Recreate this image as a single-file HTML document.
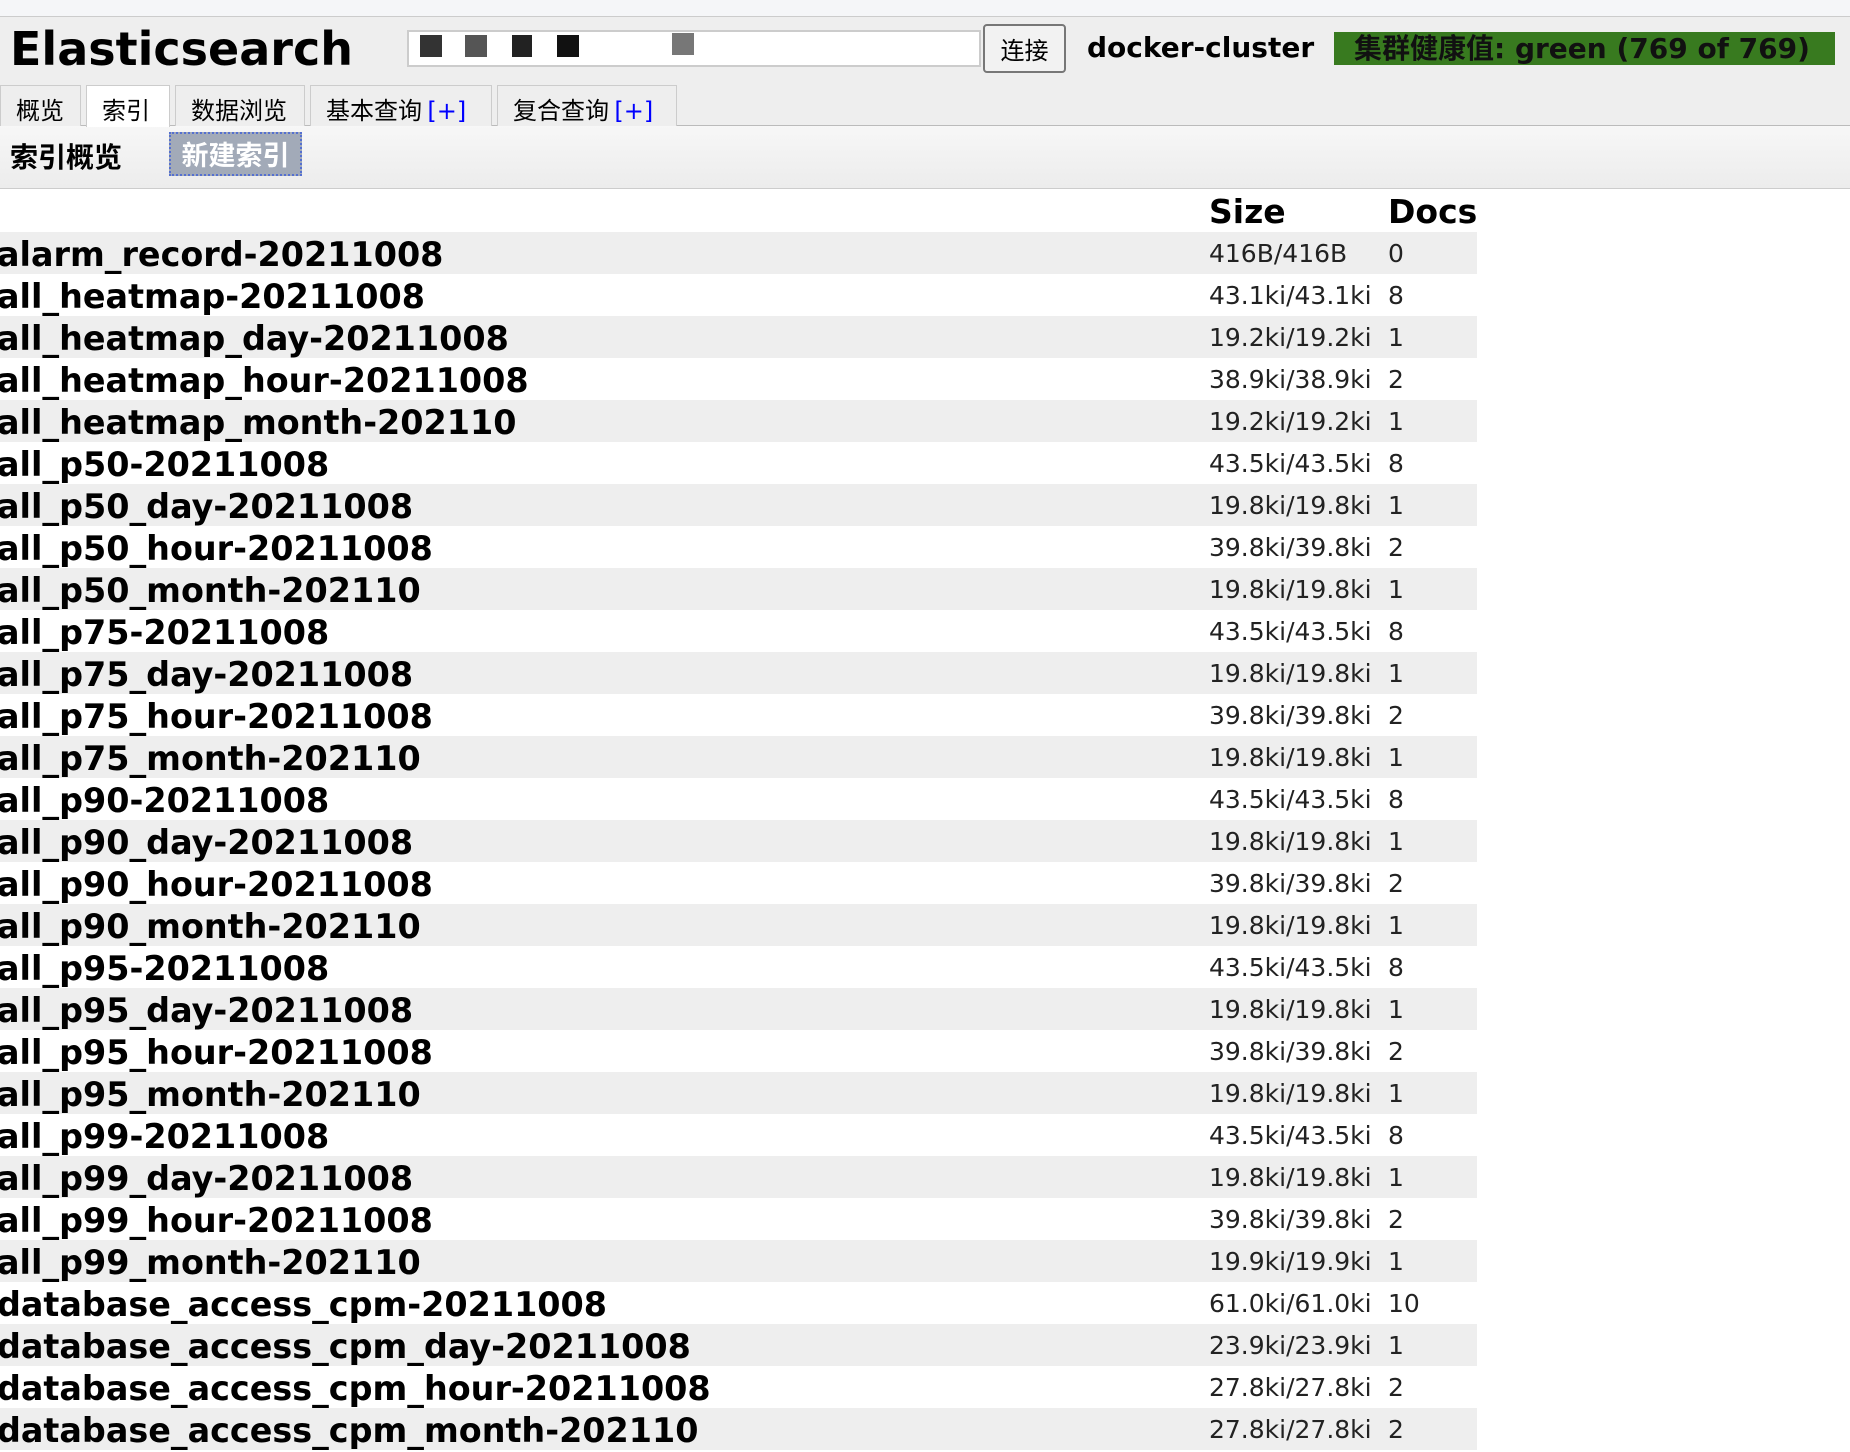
<!DOCTYPE html>
<html><head><meta charset="utf-8"><style>
*{margin:0;padding:0;box-sizing:border-box}
body{width:1850px;height:1444px;overflow:hidden;background:#fff;font-family:"DejaVu Sans","Noto Sans CJK SC",sans-serif;position:relative;color:#000}
.a{position:absolute;white-space:nowrap}
#top{left:0;top:0;width:1850px;height:17px;background:#f5f6f8;border-bottom:1px solid #ccc}
#hdr{left:0;top:17px;width:1850px;height:108px;background:#eee}
#sub{left:0;top:125px;width:1850px;height:64px;background:linear-gradient(#f7f7f7,#ececec);border-top:1px solid #bbb;border-bottom:1px solid #ccc}
.tab{position:absolute;top:85px;height:41px;border:1px solid #ccc;border-bottom:none;background:#eee;font-size:24px;line-height:46px;padding-left:15px;font-family:"Noto Sans CJK SC",sans-serif}
.tab b{color:#00f;font-weight:normal;font-family:"DejaVu Sans",sans-serif}
.row{position:absolute;left:0;width:1477px;height:42px}
.g{background:#eee}
.n{position:absolute;left:-3px;top:2px;font-weight:bold;font-size:33.4px;line-height:42px}
.s{position:absolute;left:1209px;top:1px;font-size:25px;line-height:42px;color:#222}
.d{position:absolute;left:1388px;top:1px;font-size:25px;line-height:42px;color:#222}
</style></head><body>
<div class="a" id="top"></div>
<div class="a" id="hdr"></div>
<div class="a" style="left:10px;top:21px;font-size:46px;font-weight:bold;line-height:56px">Elasticsearch</div>
<div class="a" style="left:407px;top:30px;width:574px;height:37px;background:#fff;border:2px solid #ccc"></div>
<div class="a" style="left:420px;top:35px;width:22px;height:22px;background:#333"></div>
<div class="a" style="left:465px;top:35px;width:22px;height:22px;background:#555"></div>
<div class="a" style="left:512px;top:35px;width:20px;height:22px;background:#222"></div>
<div class="a" style="left:557px;top:35px;width:22px;height:22px;background:#111"></div>
<div class="a" style="left:672px;top:33px;width:22px;height:22px;background:#777"></div>
<div class="a" style="left:983px;top:24px;width:83px;height:49px;border:2px solid #777;border-radius:4px;background:#f2f2f2;font-size:24px;line-height:45px;text-align:center;font-family:'Noto Sans CJK SC',sans-serif">连接</div>
<div class="a" style="left:1087px;top:28px;font-size:28px;font-weight:bold;line-height:40px">docker-cluster</div>
<div class="a" style="left:1334px;top:32px;width:501px;height:33px;background:#387a1f;font-size:28px;font-weight:bold;line-height:33px;padding-left:20px;color:#111">集群健康值: green (769 of 769)</div>
<div class="a" id="sub"></div>
<div class="tab" style="left:0;width:81px">概览</div>
<div class="tab" style="left:86px;width:84px;background:#fff;height:42px">索引</div>
<div class="tab" style="left:175px;width:130px">数据浏览</div>
<div class="tab" style="left:310px;width:182px">基本查询 <b>[+]</b></div>
<div class="tab" style="left:497px;width:180px">复合查询 <b>[+]</b></div>
<div class="a" style="left:10px;top:135px;font-size:28px;font-weight:bold;line-height:42px;font-family:'Noto Sans CJK SC',sans-serif">索引概览</div>
<div class="a" style="left:169px;top:132px;width:133px;height:44px;background:#a2aab8;border:2px dotted #5570d0;color:#fff;font-size:27px;font-weight:bold;line-height:40px;text-align:center;font-family:'Noto Sans CJK SC',sans-serif">新建索引</div>
<div class="a" style="left:1209px;top:190px;font-size:33px;font-weight:bold;line-height:44px">Size</div>
<div class="a" style="left:1388px;top:190px;font-size:33px;font-weight:bold;line-height:44px">Docs</div>
<div class="row g" style="top:232px"><span class="n">alarm_record-20211008</span><span class="s">416B/416B</span><span class="d">0</span></div>
<div class="row" style="top:274px"><span class="n">all_heatmap-20211008</span><span class="s">43.1ki/43.1ki</span><span class="d">8</span></div>
<div class="row g" style="top:316px"><span class="n">all_heatmap_day-20211008</span><span class="s">19.2ki/19.2ki</span><span class="d">1</span></div>
<div class="row" style="top:358px"><span class="n">all_heatmap_hour-20211008</span><span class="s">38.9ki/38.9ki</span><span class="d">2</span></div>
<div class="row g" style="top:400px"><span class="n">all_heatmap_month-202110</span><span class="s">19.2ki/19.2ki</span><span class="d">1</span></div>
<div class="row" style="top:442px"><span class="n">all_p50-20211008</span><span class="s">43.5ki/43.5ki</span><span class="d">8</span></div>
<div class="row g" style="top:484px"><span class="n">all_p50_day-20211008</span><span class="s">19.8ki/19.8ki</span><span class="d">1</span></div>
<div class="row" style="top:526px"><span class="n">all_p50_hour-20211008</span><span class="s">39.8ki/39.8ki</span><span class="d">2</span></div>
<div class="row g" style="top:568px"><span class="n">all_p50_month-202110</span><span class="s">19.8ki/19.8ki</span><span class="d">1</span></div>
<div class="row" style="top:610px"><span class="n">all_p75-20211008</span><span class="s">43.5ki/43.5ki</span><span class="d">8</span></div>
<div class="row g" style="top:652px"><span class="n">all_p75_day-20211008</span><span class="s">19.8ki/19.8ki</span><span class="d">1</span></div>
<div class="row" style="top:694px"><span class="n">all_p75_hour-20211008</span><span class="s">39.8ki/39.8ki</span><span class="d">2</span></div>
<div class="row g" style="top:736px"><span class="n">all_p75_month-202110</span><span class="s">19.8ki/19.8ki</span><span class="d">1</span></div>
<div class="row" style="top:778px"><span class="n">all_p90-20211008</span><span class="s">43.5ki/43.5ki</span><span class="d">8</span></div>
<div class="row g" style="top:820px"><span class="n">all_p90_day-20211008</span><span class="s">19.8ki/19.8ki</span><span class="d">1</span></div>
<div class="row" style="top:862px"><span class="n">all_p90_hour-20211008</span><span class="s">39.8ki/39.8ki</span><span class="d">2</span></div>
<div class="row g" style="top:904px"><span class="n">all_p90_month-202110</span><span class="s">19.8ki/19.8ki</span><span class="d">1</span></div>
<div class="row" style="top:946px"><span class="n">all_p95-20211008</span><span class="s">43.5ki/43.5ki</span><span class="d">8</span></div>
<div class="row g" style="top:988px"><span class="n">all_p95_day-20211008</span><span class="s">19.8ki/19.8ki</span><span class="d">1</span></div>
<div class="row" style="top:1030px"><span class="n">all_p95_hour-20211008</span><span class="s">39.8ki/39.8ki</span><span class="d">2</span></div>
<div class="row g" style="top:1072px"><span class="n">all_p95_month-202110</span><span class="s">19.8ki/19.8ki</span><span class="d">1</span></div>
<div class="row" style="top:1114px"><span class="n">all_p99-20211008</span><span class="s">43.5ki/43.5ki</span><span class="d">8</span></div>
<div class="row g" style="top:1156px"><span class="n">all_p99_day-20211008</span><span class="s">19.8ki/19.8ki</span><span class="d">1</span></div>
<div class="row" style="top:1198px"><span class="n">all_p99_hour-20211008</span><span class="s">39.8ki/39.8ki</span><span class="d">2</span></div>
<div class="row g" style="top:1240px"><span class="n">all_p99_month-202110</span><span class="s">19.9ki/19.9ki</span><span class="d">1</span></div>
<div class="row" style="top:1282px"><span class="n">database_access_cpm-20211008</span><span class="s">61.0ki/61.0ki</span><span class="d">10</span></div>
<div class="row g" style="top:1324px"><span class="n">database_access_cpm_day-20211008</span><span class="s">23.9ki/23.9ki</span><span class="d">1</span></div>
<div class="row" style="top:1366px"><span class="n">database_access_cpm_hour-20211008</span><span class="s">27.8ki/27.8ki</span><span class="d">2</span></div>
<div class="row g" style="top:1408px"><span class="n">database_access_cpm_month-202110</span><span class="s">27.8ki/27.8ki</span><span class="d">2</span></div>
</body></html>
